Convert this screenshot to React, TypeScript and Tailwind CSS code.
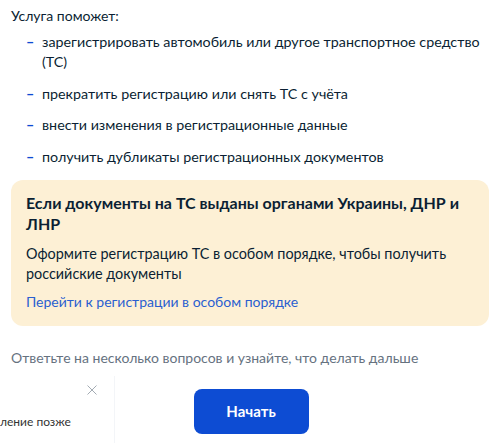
import React from "react";

const items = [
  "зарегистрировать автомобиль или другое транспортное средство (ТС)",
  "прекратить регистрацию или снять ТС с учёта",
  "внести изменения в регистрационные данные",
  "получить дубликаты регистрационных документов",
];

export default function App() {
  return (
    <div
      className="relative w-[500px] h-[443px] overflow-hidden bg-white text-[#0b1f33]"
      style={{ fontFamily: "Lato, 'Noto Sans', sans-serif" }}
    >
      <div className="px-[11px] pt-[6px]">
        <p className="text-[14px] leading-[20px]">Услуга поможет:</p>
        <ul className="mt-[6px] flex flex-col gap-[11.5px]">
          {items.map((t) => (
            <li key={t} className="flex pl-[15px] text-[14.3px] leading-[20px]">
              <span className="w-[16px] shrink-0 text-[#0d4cd3] font-bold">–</span>
              <span>{t}</span>
            </li>
          ))}
        </ul>
        <div className="mt-[13px] rounded-[12px] bg-[#fdf0d5] px-[15px] pt-[12px] pb-[14px]">
          <p className="text-[16px] leading-[21px] font-bold">
            Если документы на ТС выданы органами Украины, ДНР и ЛНР
          </p>
          <p className="mt-[10px] text-[14.4px] leading-[20px]">
            Оформите регистрацию ТС в особом порядке, чтобы получить российские документы
          </p>
          <p className="mt-[8px] text-[14px] leading-[20px] text-[#2a5fd0]">
            Перейти к регистрации в особом порядке
          </p>
        </div>
        <p className="mt-[22px] text-[14px] leading-[20px] text-[#66727f]">
          Ответьте на несколько вопросов и узнайте, что делать дальше
        </p>
        <div className="mt-[21px] flex justify-center">
          <button className="w-[115px] h-[45px] rounded-[8px] bg-[#0d4cd3] text-white text-[15px] font-bold ml-[2px]">
            Начать
          </button>
        </div>
      </div>
      <div className="absolute left-0 top-[376px] w-[115px] h-[67px] bg-white/85 border-r border-[#f3f5f8]">
        <svg className="absolute left-[87px] top-[9px]" width="10" height="10" viewBox="0 0 10 10">
          <path d="M0.5 0.5 L9.5 9.5 M9.5 0.5 L0.5 9.5" stroke="#a3abb3" strokeWidth="1" fill="none" />
        </svg>
        <span className="absolute left-0 top-[38px] text-[12px] leading-[16px] text-[#333] whitespace-nowrap">ление позже</span>
      </div>
    </div>
  );
}
